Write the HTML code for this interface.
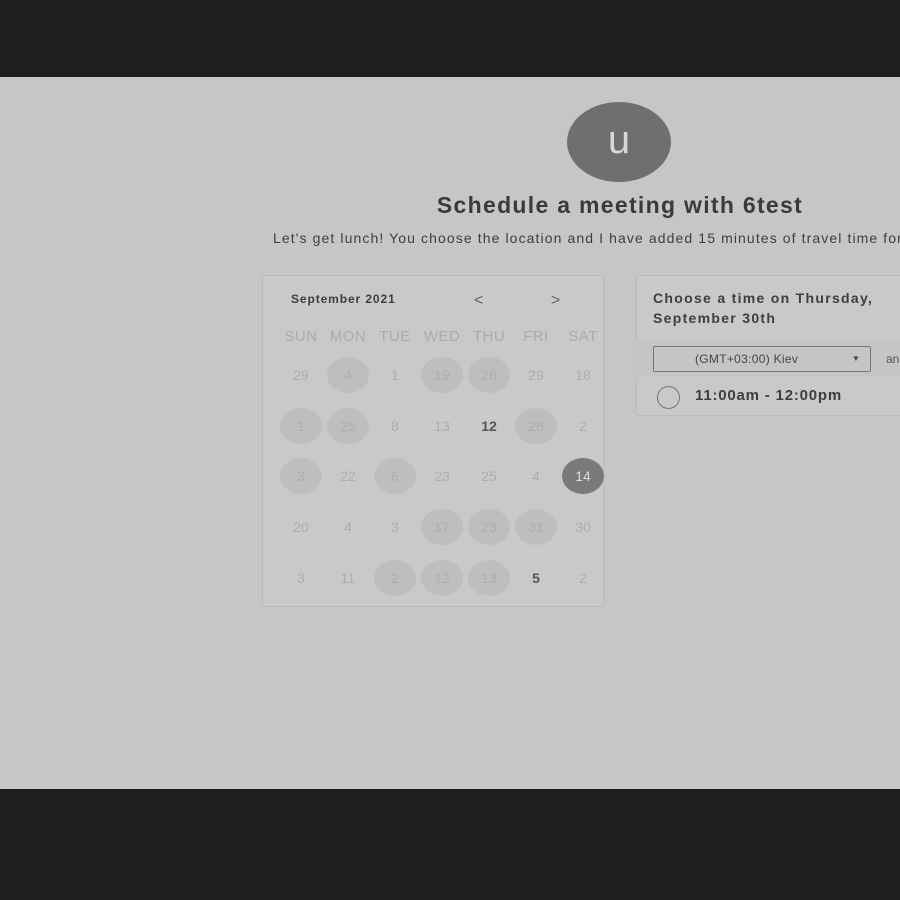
<!DOCTYPE html>
<html><head><style>
body{margin:0;width:900px;height:900px;background:#c6c6c6;font-family:"Liberation Sans",sans-serif;position:relative;overflow:hidden}
.bar{position:absolute;left:0;width:900px;background:#1e1e1e}
.a{position:absolute}
.c{position:absolute;width:42px;height:36px;border-radius:50%;text-align:center;line-height:36px;font-size:14px;color:#adadad;transform:translate(-50%,-50%)}
</style></head><body>
<div class="bar" style="top:0;height:77px"></div>
<div class="bar" style="top:789px;height:111px"></div>
<div class="a" style="left:567px;top:102px;width:104px;height:80px;border-radius:50%;background:#6f6f6f;color:#d8d8d8;font-size:40px;text-align:center;line-height:76px">u</div>
<div class="a" style="left:0;width:1240px;top:192px;text-align:center;font-size:23px;letter-spacing:1.3px;font-weight:bold;color:#3a3a3a">Schedule a meeting with 6test</div>
<div class="a" style="left:273px;top:230px;font-size:14px;letter-spacing:1.1px;color:#3e3e3e;white-space:nowrap">Let's get lunch! You choose the location and I have added 15 minutes of travel time for</div>
<div class="a" style="left:262px;top:275px;width:340px;height:330px;border:1px solid #bababa;background:#c9c9c9;border-radius:2px"></div>
<div class="a" style="left:291px;top:292px;font-size:12px;letter-spacing:0.9px;font-weight:bold;color:#3e3e3e">September 2021</div>
<div class="a" style="left:474px;top:292px;font-size:16px;color:#666">&lt;</div>
<div class="a" style="left:551px;top:292px;font-size:16px;color:#666">&gt;</div>
<div id="cal"></div>
<div class="a" style="left:636px;top:275px;width:270px;height:139px;border:1px solid #bababa;background:#c9c9c9;border-radius:2px"></div>
<div class="a" style="left:636px;top:340px;width:270px;height:37px;background:#c5c5c5"></div>
<div class="a" style="left:653px;top:288px;font-size:14px;letter-spacing:1.3px;font-weight:bold;color:#3e3e3e;line-height:20px">Choose a time on Thursday,<br>September 30th</div>
<div class="a" style="left:653px;top:346px;width:216px;height:24px;border:1px solid #777;border-radius:2px;font-size:12px;letter-spacing:0.3px;color:#444;line-height:24px"><span style="margin-left:41px">(GMT+03:00) Kiev</span><span style="position:absolute;left:198px;font-size:8px">▼</span></div>
<div class="a" style="left:886px;top:352px;font-size:12px;color:#555">an</div>
<div class="a" style="left:657px;top:386px;width:21px;height:21px;border:1.5px solid #777;border-radius:50%"></div>
<div class="a" style="left:695px;top:387px;font-size:15px;letter-spacing:0.8px;font-weight:bold;color:#3e3e3e">11:00am - 12:00pm</div>
<script>
var h=["SUN","MON","TUE","WED","THU","FRI","SAT"],xs=[301,348,395,442,489,536,583],ys=[375,426,476,527,578];
var d=[["29","4f","1","19f","26f","29","18"],["1f","25f","8","13","12b","28f","2"],["3f","22","6f","23","25","4","14s"],["20","4","3","17f","23f","31f","30"],["3","11","2f","12f","13f","5b","2"]];
var o="";h.forEach((t,i)=>o+='<div class="a" style="left:'+(xs[i]-30)+'px;width:60px;text-align:center;top:328px;font-size:15px;letter-spacing:0.5px;color:#ababab">'+t+'</div>');
d.forEach((r,j)=>r.forEach((v,i)=>{var n=v.replace(/[fbs]/g,''),s='';if(v.includes('f'))s='background:#bebebe;';if(v.includes('b'))s='color:#555;font-weight:bold;';if(v.includes('s'))s='background:#7a7a7a;color:#ddd;';o+='<div class="c" style="left:'+xs[i]+'px;top:'+ys[j]+'px;'+s+'">'+n+'</div>';}));
document.getElementById('cal').innerHTML=o;
</script>
</body></html>
